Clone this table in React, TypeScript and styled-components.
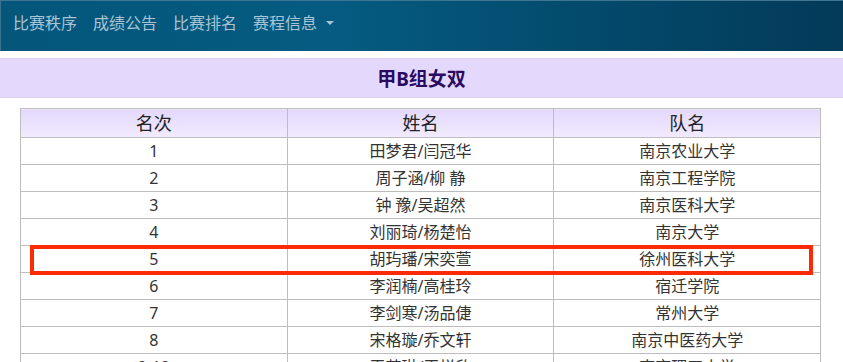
import styled, { createGlobalStyle } from 'styled-components';

const GlobalStyle = createGlobalStyle`
	body {
		margin: 0;
		background: #fff;
		font-family: 'Noto Sans', 'Noto Sans CJK SC', sans-serif;
	}
`;

const NavBar = styled.nav`
	display: flex;
	align-items: center;
	gap: 16px;
	height: 51px;
	padding: 0 12px 6px;
	border-top: 1px solid #3f7590;
	border-left: 1px solid #3a7290;
	background: linear-gradient(to right, #04567b 0%, #055b81 40%, #034a6c 70%, #033a59 100%);
	box-sizing: border-box;
`;

const NavLink = styled.a`
	display: flex;
	align-items: center;
	gap: 9px;
	color: #a9c4d4;
	font-size: 16px;
	text-decoration: none;
	line-height: 20px;
`;

const Caret = styled.span`
	display: inline-block;
	width: 0;
	height: 0;
	border-top: 4px solid #a9c4d4;
	border-left: 4px solid transparent;
	border-right: 4px solid transparent;
`;

const TitleBand = styled.div`
	margin-top: 7px;
	height: 40px;
	box-sizing: border-box;
	display: flex;
	align-items: center;
	justify-content: center;
	background: #e4d9fc;
	border-top: 1px solid #dccff5;
	border-bottom: 1px solid #dccff5;
	color: #2b0b62;
	font-size: 19px;
	font-weight: bold;
`;

const TableWrap = styled.div`
	position: relative;
	margin: 10px 0 0 20px;
	width: 801px;
`;

const Table = styled.table`
	width: 100%;
	border-collapse: collapse;
	table-layout: fixed;
	font-size: 16px;
	color: #333;
`;

const HeadCell = styled.th`
	height: 28px;
	padding: 0;
	border: 1px solid #bdbdbd;
	background: linear-gradient(to bottom, #e3d8fc, #f2ebff);
	color: #222;
	font-size: 18px;
	font-weight: normal;
	line-height: 26px;
`;

const Cell = styled.td`
	height: 26px;
	padding: 0;
	border: 1px solid #bdbdbd;
	text-align: center;
	line-height: 26px;
`;

const Highlight = styled.div<{ $top: number }>`
	position: absolute;
	left: 10px;
	right: 8px;
	top: ${p => p.$top}px;
	height: 30px;
	box-sizing: border-box;
	border: 4px solid #fd2a06;
	pointer-events: none;
`;

const rows = [
	['1', '田梦君/闫冠华', '南京农业大学'],
	['2', '周子涵/柳 静', '南京工程学院'],
	['3', '钟 豫/吴超然', '南京医科大学'],
	['4', '刘丽琦/杨楚怡', '南京大学'],
	['5', '胡玙璠/宋奕萱', '徐州医科大学'],
	['6', '李润楠/高桂玲', '宿迁学院'],
	['7', '李剑寒/汤品倢', '常州大学'],
	['8', '宋格璇/乔文轩', '南京中医药大学'],
	['9-12', '王若琳/王悦欣', '南京理工大学'],
];

const App = () => {
	return (
		<>
			<GlobalStyle />
			<NavBar>
				<NavLink>比赛秩序</NavLink>
				<NavLink>成绩公告</NavLink>
				<NavLink>比赛排名</NavLink>
				<NavLink>
					赛程信息
					<Caret />
				</NavLink>
			</NavBar>
			<TitleBand>甲B组女双</TitleBand>
			<TableWrap>
				<Table>
					<thead>
						<tr>
							<HeadCell>名次</HeadCell>
							<HeadCell>姓名</HeadCell>
							<HeadCell>队名</HeadCell>
						</tr>
					</thead>
					<tbody>
						{rows.map(r => (
							<tr key={r[0]}>
								<Cell>{r[0]}</Cell>
								<Cell>{r[1]}</Cell>
								<Cell>{r[2]}</Cell>
							</tr>
						))}
					</tbody>
				</Table>
				<Highlight $top={137} />
			</TableWrap>
		</>
	);
};

export default App;
